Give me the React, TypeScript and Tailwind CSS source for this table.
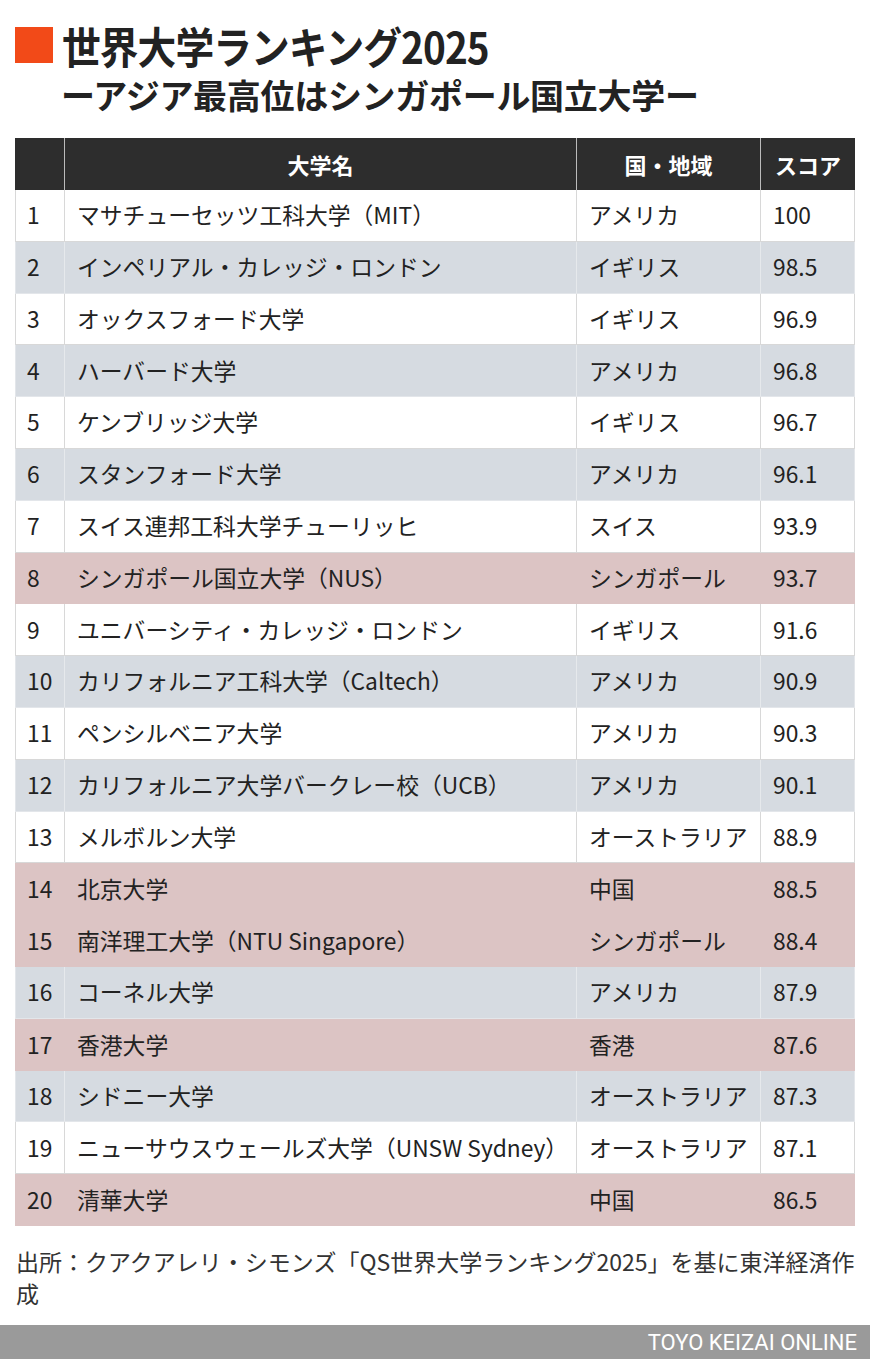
const rows: { rank: number; name: string; region: string; score: string; tone: "white" | "gray" | "pink" }[] = [
  { rank: 1, name: "マサチューセッツ工科大学（MIT）", region: "アメリカ", score: "100", tone: "white" },
  { rank: 2, name: "インペリアル・カレッジ・ロンドン", region: "イギリス", score: "98.5", tone: "gray" },
  { rank: 3, name: "オックスフォード大学", region: "イギリス", score: "96.9", tone: "white" },
  { rank: 4, name: "ハーバード大学", region: "アメリカ", score: "96.8", tone: "gray" },
  { rank: 5, name: "ケンブリッジ大学", region: "イギリス", score: "96.7", tone: "white" },
  { rank: 6, name: "スタンフォード大学", region: "アメリカ", score: "96.1", tone: "gray" },
  { rank: 7, name: "スイス連邦工科大学チューリッヒ", region: "スイス", score: "93.9", tone: "white" },
  { rank: 8, name: "シンガポール国立大学（NUS）", region: "シンガポール", score: "93.7", tone: "pink" },
  { rank: 9, name: "ユニバーシティ・カレッジ・ロンドン", region: "イギリス", score: "91.6", tone: "white" },
  { rank: 10, name: "カリフォルニア工科大学（Caltech）", region: "アメリカ", score: "90.9", tone: "gray" },
  { rank: 11, name: "ペンシルベニア大学", region: "アメリカ", score: "90.3", tone: "white" },
  { rank: 12, name: "カリフォルニア大学バークレー校（UCB）", region: "アメリカ", score: "90.1", tone: "gray" },
  { rank: 13, name: "メルボルン大学", region: "オーストラリア", score: "88.9", tone: "white" },
  { rank: 14, name: "北京大学", region: "中国", score: "88.5", tone: "pink" },
  { rank: 15, name: "南洋理工大学（NTU Singapore）", region: "シンガポール", score: "88.4", tone: "pink" },
  { rank: 16, name: "コーネル大学", region: "アメリカ", score: "87.9", tone: "gray" },
  { rank: 17, name: "香港大学", region: "香港", score: "87.6", tone: "pink" },
  { rank: 18, name: "シドニー大学", region: "オーストラリア", score: "87.3", tone: "gray" },
  { rank: 19, name: "ニューサウスウェールズ大学（UNSW Sydney）", region: "オーストラリア", score: "87.1", tone: "white" },
  { rank: 20, name: "清華大学", region: "中国", score: "86.5", tone: "pink" },
];

const toneClass = {
  white: "bg-white border-x border-b border-[#d8d8d8]",
  gray: "bg-[#d6dbe1] border-x border-b border-[#e3e6ea]",
  pink: "bg-[#dcc4c4] border-x border-[#dcc4c4]",
};

const cellLine = {
  white: "border-r border-[#d8d8d8]",
  gray: "border-r border-[#e6e9ec]",
  pink: "",
};

export default function App() {
  return (
    <div
      className="w-[870px] h-[1359px] bg-white text-[#222] flex flex-col"
      style={{ fontFamily: '"Noto Sans CJK JP", "Noto Sans", sans-serif' }}
    >
      {/* title */}
      <div className="pt-[20px] px-[15px]">
        <div className="flex items-center">
          <div className="w-[38px] h-[36px] bg-[#f24a18]" />
          <h1 className="ml-[9px] text-[43px] leading-[50px] font-bold tracking-[-1px] origin-left scale-x-[0.9] whitespace-nowrap">
            世界大学ランキング2025
          </h1>
        </div>
        <p className="pl-[46px] text-[34px] leading-[46px] font-bold mt-[2px] tracking-[-0.3px] whitespace-nowrap">
          ーアジア最高位はシンガポール国立大学ー
        </p>
      </div>

      {/* table */}
      <div className="mx-[15px] mt-[20px]">
        <div className="grid grid-cols-[50px_512px_184px_94px] h-[52px] bg-[#2d2d2d] text-white font-bold text-[22px]">
          <div className="border-r border-[#bbbbbb]" />
          <div className="flex items-center justify-center border-r border-[#bbbbbb]">大学名</div>
          <div className="flex items-center justify-center border-r border-[#bbbbbb]">国・地域</div>
          <div className="flex items-center justify-center">スコア</div>
        </div>
        {rows.map((r) => (
          <div
            key={r.rank}
            className={`grid grid-cols-[49px_512px_184px_93px] h-[51.8px] text-[22.8px] ${toneClass[r.tone]}`}
          >
            <div className={`flex items-center pl-[11px] ${cellLine[r.tone]}`}>{r.rank}</div>
            <div className={`flex items-center pl-[12px] whitespace-nowrap ${cellLine[r.tone]}`}>{r.name}</div>
            <div className={`flex items-center pl-[12px] whitespace-nowrap ${cellLine[r.tone]}`}>{r.region}</div>
            <div className="flex items-center pl-[12px]">{r.score}</div>
          </div>
        ))}
      </div>

      {/* source */}
      <p className="px-[16px] mt-[19px] text-[23px] leading-[32px] text-[#333] whitespace-nowrap">
        出所：クアクアレリ・シモンズ「QS世界大学ランキング2025」を基に東洋経済作
        <br />
        成
      </p>

      <div className="flex-1" />

      <div
        className="h-[34px] bg-[#9a9a9a] flex items-center justify-end pr-[13px] text-white text-[22px]"
        style={{ fontFamily: "Roboto, sans-serif" }}
      >
        TOYO KEIZAI ONLINE
      </div>
    </div>
  );
}
